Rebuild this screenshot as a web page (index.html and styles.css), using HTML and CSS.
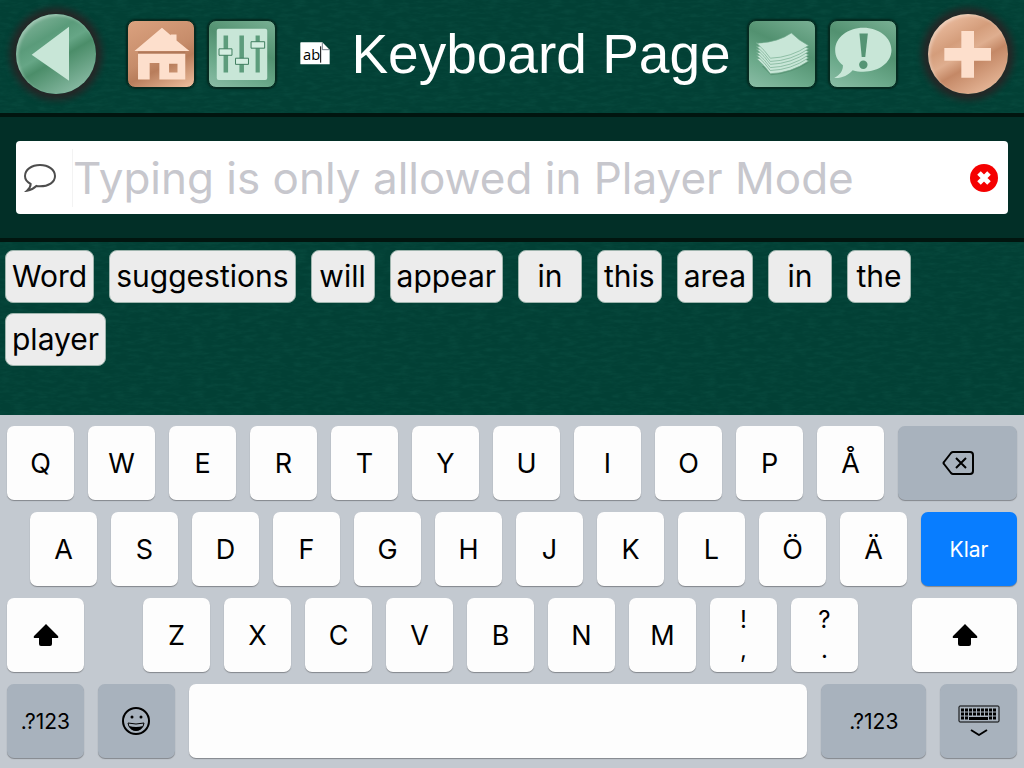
FILE: index.html
```
<!DOCTYPE html>
<html lang="en">
<head>
    <meta charset="UTF-8">
    <meta name="viewport" content="width=device-width, initial-scale=1.0">
    <title>Keyboard Page</title>
    <link rel="stylesheet" href="styles.css">
</head>
<body>
    <header class="toolbar">
        <button class="round-btn green" aria-label="Back">
            <svg viewBox="0 0 240 240"><path class="glyph" d="M47 122L159 38V200Z"/></svg>
        </button>
        <div class="tools">
            <button class="square-btn copper" aria-label="Home">
                <svg viewBox="0 0 204 204">
                    <path class="shade" d="M31 94H177V101H31Z"/>
                    <path class="glyph" d="M20 93L105 21L132 44V42H150V60L190 93ZM31 101H177V181H97V130H67V181H31ZM127 132V159H153V132Z"/>
                </svg>
            </button>
            <button class="square-btn green" aria-label="Settings">
                <svg viewBox="0 0 204 204">
                    <rect class="glyph" x="24" y="24" width="156" height="158" rx="6"/>
                    <path class="track" d="M45 45H59V159H45ZM94 45H108V159H94ZM144 45H157V159H144Z"/>
                    <path class="knob" d="M31 86H71V106H31ZM82 115H122V134H82ZM130 64H172V84H130Z"/>
                </svg>
            </button>
        </div>
        <div class="title">
            <svg class="page-icon" viewBox="0 0 90 69">
                <path fill="#fff" d="M3 1H67L89 23V67H3Q1 67 1 65V3Q1 1 3 1Z"/>
                <path fill="none" stroke="#345" stroke-width="2" d="M67 2V23H88"/>
                <path stroke="#000" stroke-width="3" d="M62 13V62"/>
                <text x="9" y="54">ab</text>
            </svg>
            <h1>Keyboard Page</h1>
        </div>
        <div class="tools">
            <button class="square-btn green" aria-label="Pages">
                <svg viewBox="0 0 204 204">
                    <defs>
                        <path id="sheet" d="M22 67Q28 70 32 68Q90 65 131 37Q155 61 184 76Q130 113 66 115Q49 90 22 67Z"/>
                    </defs>
                    <path class="stack-shadow" d="M40 140L68 168Q130 163 184 129V110Z"/>
                    <g class="sheets">
                        <use href="#sheet" y="48"/>
                        <use href="#sheet" y="38"/>
                        <use href="#sheet" y="29"/>
                        <use href="#sheet" y="19"/>
                        <use href="#sheet" y="10"/>
                        <use href="#sheet"/>
                    </g>
                </svg>
            </button>
            <button class="square-btn green" aria-label="Feedback">
                <svg viewBox="0 0 204 204">
                    <path class="glyph" d="M103 21C151 21 190 51 190 90S151 157 103 157C91 157 80 156 70 152C56 168 38 177 13 176C31 166 40 156 40 137C24 125 16 109 16 90C16 51 55 21 103 21Z"/>
                    <path class="mark" d="M91 39H117L109 111H98Z"/>
                    <circle class="mark" cx="103" cy="135" r="13"/>
                </svg>
            </button>
        </div>
        <button class="round-btn copper" aria-label="Add">
            <svg viewBox="0 0 240 240"><path class="glyph" d="M100 51H138V102H189V140H138V191H100V140H49V102H100Z"/></svg>
        </button>
    </header>

    <section class="message-bar">
        <div class="message-box">
            <label for="message" aria-label="Message">
                <svg class="bubble" viewBox="0 0 96 84">
                    <path d="M48 3C73 3 93 17 93 36S73 67 48 67C44 67 40 67 37 66C28 75 20 78 9 80C17 73 20 67 20 60C9 54 3 46 3 36C3 17 23 3 48 3Z"/>
                </svg>
            </label>
            <input type="text" id="message" placeholder="Typing is only allowed in Player Mode">
            <button class="clear-btn" aria-label="Clear">
                <svg viewBox="0 0 28 28">
                    <circle cx="14" cy="14" r="14"/>
                    <path d="M9 9L19 19M19 9L9 19"/>
                </svg>
            </button>
        </div>
    </section>

    <main class="suggestions">
        <button>Word</button>
        <button>suggestions</button>
        <button>will</button>
        <button>appear</button>
        <button>in</button>
        <button>this</button>
        <button>area</button>
        <button>in</button>
        <button>the</button>
        <button>player</button>
    </main>

    <section class="keyboard">
        <div class="key-row">
            <button class="key">Q</button>
            <button class="key">W</button>
            <button class="key">E</button>
            <button class="key">R</button>
            <button class="key">T</button>
            <button class="key">Y</button>
            <button class="key">U</button>
            <button class="key">I</button>
            <button class="key">O</button>
            <button class="key">P</button>
            <button class="key">Å</button>
            <button class="key gray backspace" aria-label="Backspace">
                <svg width="32" height="24" viewBox="0 0 32 24">
                    <path class="line" d="M11 1H28Q31 1 31 4V20Q31 23 28 23H11Q10 23 9 22L2 13Q1 12 2 11L9 2Q10 1 11 1ZM14 7L24 17M24 7L14 17"/>
                </svg>
            </button>
        </div>
        <div class="key-row">
            <span class="indent"></span>
            <button class="key">A</button>
            <button class="key">S</button>
            <button class="key">D</button>
            <button class="key">F</button>
            <button class="key">G</button>
            <button class="key">H</button>
            <button class="key">J</button>
            <button class="key">K</button>
            <button class="key">L</button>
            <button class="key">Ö</button>
            <button class="key">Ä</button>
            <button class="key done">Klar</button>
        </div>
        <div class="key-row">
            <button class="key side" aria-label="Shift">
                <svg width="26" height="22" viewBox="0 0 26 22"><path d="M13 0L25 12Q26 14 24 14H19V20Q19 22 17 22H8Q6 22 6 20V14H2Q0 14 1 12Z"/></svg>
            </button>
            <span class="gap-left"></span>
            <button class="key">Z</button>
            <button class="key">X</button>
            <button class="key">C</button>
            <button class="key">V</button>
            <button class="key">B</button>
            <button class="key">N</button>
            <button class="key">M</button>
            <button class="key double"><span>!</span><span>,</span></button>
            <button class="key double"><span>?</span><span>.</span></button>
            <span class="gap-right"></span>
            <button class="key wide" aria-label="Shift">
                <svg width="26" height="22" viewBox="0 0 26 22"><path d="M13 0L25 12Q26 14 24 14H19V20Q19 22 17 22H8Q6 22 6 20V14H2Q0 14 1 12Z"/></svg>
            </button>
        </div>
        <div class="key-row">
            <button class="key gray side small">.?123</button>
            <button class="key gray side" aria-label="Emoji">
                <svg width="28" height="28" viewBox="0 0 28 28">
                    <circle class="line" cx="14" cy="14" r="13"/>
                    <circle cx="10" cy="10" r="1.5"/>
                    <circle cx="19" cy="10" r="1.5"/>
                    <path class="line thin" d="M6 16Q14 18 22 16Q21 23 14 23T6 16Z"/>
                    <path d="M7 19Q14 21 21 19Q19 24 14 24T7 19Z"/>
                </svg>
            </button>
            <button class="key space" aria-label="Space"></button>
            <button class="key gray wide small">.?123</button>
            <button class="key gray side" aria-label="Hide keyboard">
                <svg width="42" height="32" viewBox="0 0 42 32">
                    <rect class="line thin" x="1" y="1" width="40" height="16" rx="1"/>
                    <path class="dots" d="M3 5H39M3 9H39M3 13H11M31 13H39"/>
                    <path d="M11 12H30V15H11Z"/>
                    <path class="line" d="M13 25L21 30L29 25"/>
                </svg>
            </button>
        </div>
    </section>
</body>
</html>
```
FILE: styles.css
```
* {
    box-sizing: border-box;
}

body {
    font-family: Inter, "Liberation Sans", sans-serif;
    margin: 0;
    min-height: 100vh;
    display: flex;
    flex-direction: column;
    background-color: #024035;
    /* leather grain */
    background-image: url("data:image/svg+xml,%3Csvg xmlns='http://www.w3.org/2000/svg' width='256' height='256'%3E%3Cfilter id='g' x='0' y='0' width='1' height='1' color-interpolation-filters='sRGB'%3E%3CfeTurbulence type='fractalNoise' baseFrequency='.08 .28' numOctaves='3' seed='4' stitchTiles='stitch'/%3E%3CfeColorMatrix values='0 0 0 0 .1 0 0 0 0 .42 0 0 0 0 .36 .4 0 0 0 -.16'/%3E%3C/filter%3E%3Crect width='256' height='256' filter='url(%23g)'/%3E%3C/svg%3E");
}

button {
    padding: 0;
    border: none;
    font-family: inherit;
    color: #000;
    cursor: pointer;
}

svg {
    display: block;
}

.toolbar {
    display: flex;
    align-items: center;
    height: 113px;
    padding: 0 16px 6px;
}

.round-btn {
    width: 80px;
    height: 80px;
    border-radius: 50%;
    flex: none;
    box-shadow: 0 0 7px 6px #262626, inset 2px 2px 3px rgba(255, 255, 255, 0.3);
}

.round-btn svg {
    width: 100%;
}

.green {
    background: linear-gradient(150deg, #86b79e 5%, #5a9b7a 32%, #66a686 45%, #4b8d69 55%, #8abba5 90%);
}

.copper {
    background: linear-gradient(150deg, #f0c4a8 5%, #d49d7b 35%, #dfae8f 48%, #c48866 60%, #edc0a2 95%);
}

.tools {
    display: flex;
    gap: 13px;
    margin: 0 31px;
}

.square-btn {
    width: 68px;
    height: 68px;
    border: 1px solid #062a20;
    border-radius: 8px;
    box-shadow: 0 0 2px 1px #04251c;
}

.square-btn.green {
    background: linear-gradient(25deg, #8bbda6, #6ba98a 30%, #529170 60%, #79b094);
}

.square-btn.copper {
    background: linear-gradient(155deg, #dba27f, #c68c6a 50%, #b87d5b 65%, #efc0a0);
}

.glyph {
    fill: #c8e6d7;
    fill-rule: evenodd;
}

.copper .glyph {
    fill: #fddfcc;
}

.shade {
    fill: #b0795a;
}

.track {
    fill: #5d9c7c;
}

.knob {
    fill: #d4eee1;
    stroke: #3d7c5d;
    stroke-width: 3;
}

.mark {
    fill: #559474;
}

.sheets {
    fill: #c8e6d7;
    stroke: #6fa88b;
    stroke-width: 2;
}

.stack-shadow {
    fill: #45805f;
    opacity: 0.5;
}

.title {
    flex: 1;
    display: flex;
    align-items: center;
    justify-content: center;
    gap: 21px;
    margin: 0 -31px 0 -24px;
    white-space: nowrap;
}

.title h1 {
    margin: 0;
    font: 55px/64px "Liberation Sans", sans-serif;
    color: #fff;
}

.page-icon {
    width: 30px;
    height: 23px;
}

.page-icon text {
    font: 44px "Open Sans", sans-serif;
}

.message-bar {
    padding: 24px 16px;
    background: #022f27;
    border-top: 4px solid #01150f;
    border-bottom: 4px solid #01150f;
}

.message-box {
    display: flex;
    align-items: center;
    height: 73px;
    padding: 0 10px 0 8px;
    background: #fff;
    border-radius: 4px;
}

.bubble {
    width: 32px;
    height: 28px;
    fill: none;
    stroke: #4d4d4d;
    stroke-width: 6;
}

.message-box input {
    flex: 1;
    min-width: 0;
    height: 58px;
    margin: 0 16px;
    padding: 0;
    border: none;
    border-left: 1px solid #f3f3f3;
    outline: none;
    font: 44px Inter, sans-serif;
}

.message-box input::placeholder {
    color: #c7c7cd;
}

.clear-btn {
    width: 28px;
    height: 28px;
    background: none;
}

.clear-btn circle {
    fill: #f50000;
}

.clear-btn path {
    stroke: #fff;
    stroke-width: 5;
}

.suggestions {
    flex: 1;
    display: flex;
    flex-wrap: wrap;
    align-content: flex-start;
    gap: 10px 15px;
    padding: 8px 16px 8px 5px;
}

.suggestions button {
    height: 53px;
    min-width: 64px;
    padding: 0 6px 2px;
    background: #ececec;
    border: 1px solid #9fb5ae;
    border-radius: 8px;
    font-size: 30px;
}

.keyboard {
    display: flex;
    flex-direction: column;
    gap: 12px;
    padding: 11px 7px 10px;
    background: #c3c9d0;
}

.key-row {
    display: flex;
    gap: 14px;
}

/* flex-grow values are the relative key widths */
.key {
    display: flex;
    align-items: center;
    justify-content: center;
    flex: 67 1 0;
    min-width: 0;
    height: 74px;
    background: #fdfdfd;
    border-radius: 7px;
    box-shadow: 0 1px 1px #83878c;
    font-size: 27px;
}

.gray {
    background: #a8b2bd;
}

.backspace {
    flex-grow: 119;
}

.done {
    flex-grow: 96;
    background: #087dff;
    color: #fff;
    font-size: 21px;
}

.side {
    flex-grow: 77;
}

.wide {
    flex-grow: 105;
}

.space {
    flex-grow: 620;
}

.small {
    font-size: 21px;
}

.indent {
    flex: 9 1 0;
}

.gap-left {
    flex: 31 1 0;
}

.gap-right {
    flex: 26 1 0;
}

.double {
    flex-direction: column;
    font-size: 24px;
    line-height: 30px;
}

.line {
    fill: none;
    stroke: #000;
    stroke-width: 2;
    stroke-linejoin: round;
}

.thin {
    stroke-width: 1;
}

.dots {
    fill: none;
    stroke: #000;
    stroke-width: 3;
    stroke-dasharray: 3 1;
}
```
